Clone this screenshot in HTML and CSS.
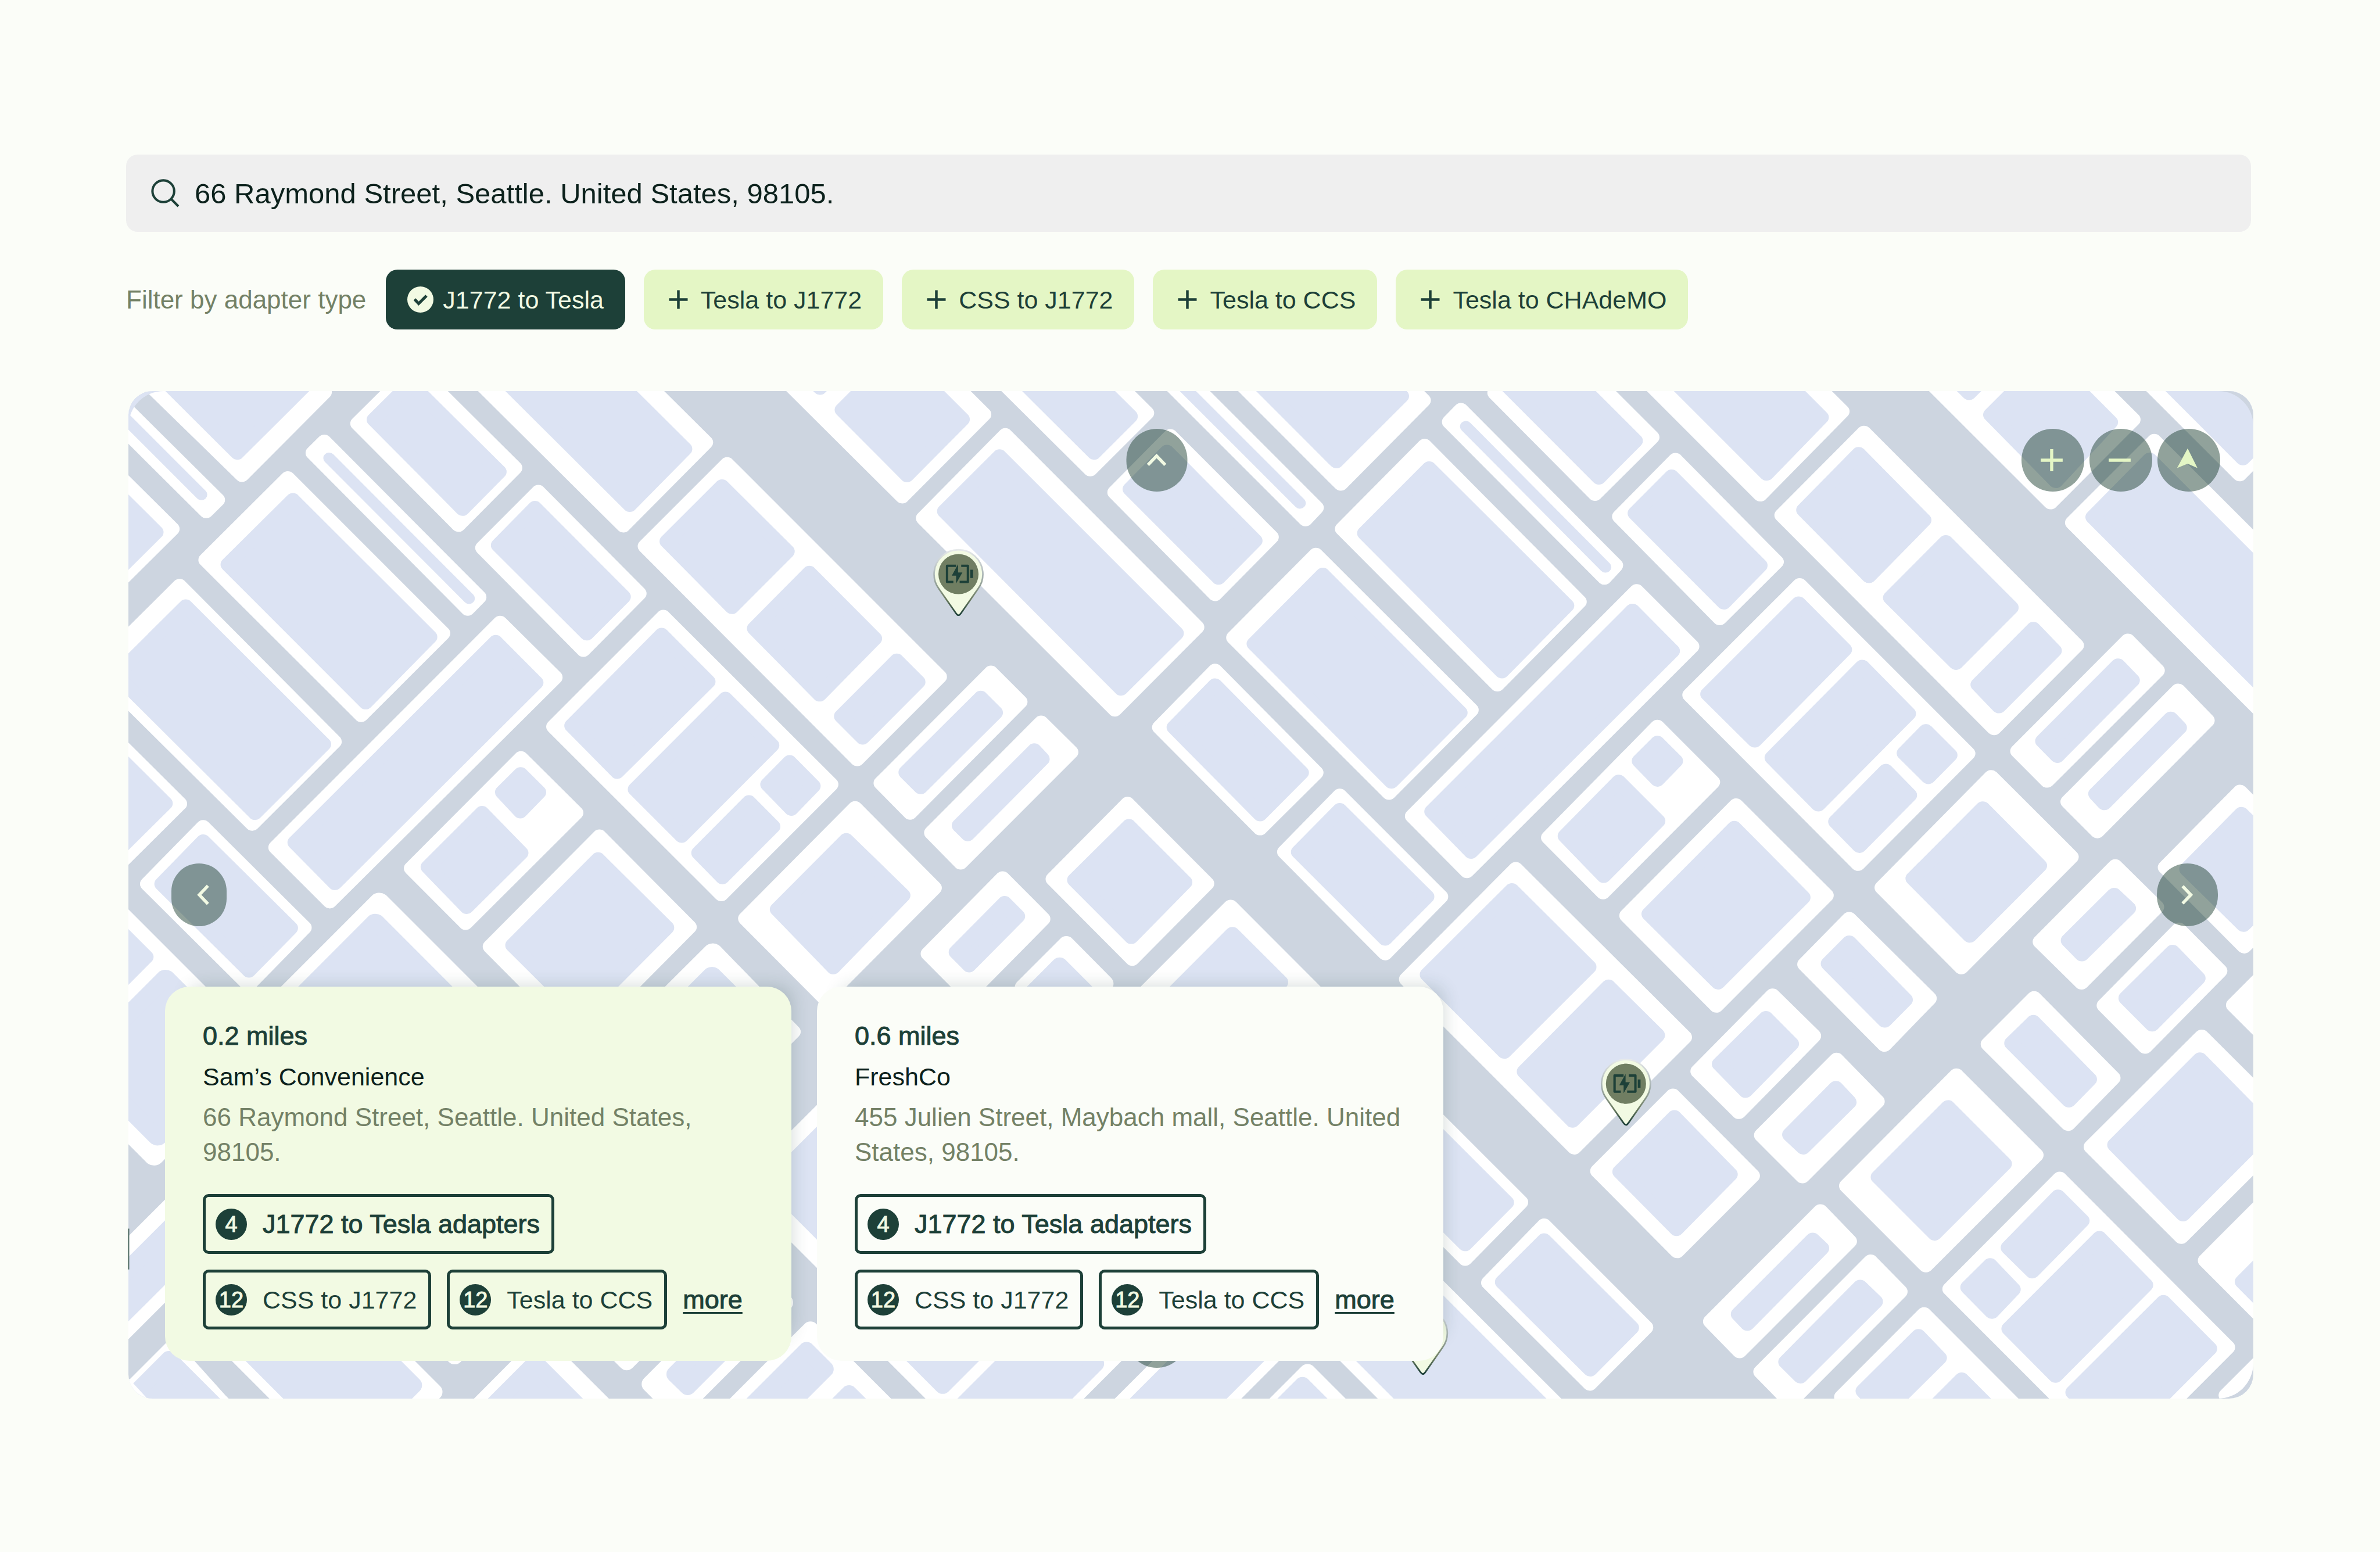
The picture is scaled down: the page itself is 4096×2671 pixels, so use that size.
FILE: index.html
```html
<!DOCTYPE html>
<html lang="en">
<head>
<meta charset="utf-8">
<meta name="viewport" content="width=device-width, initial-scale=1">
<title>Adapter finder</title>
<link rel="stylesheet" href="styles.css">
</head>
<body>
<main class="page">
  <form class="search" role="search">
    <label for="address" class="search-icon" aria-label="Address">
      <svg viewBox="0 0 72 72" fill="none" stroke="currentColor" stroke-width="6"><circle cx="31" cy="31" r="27.500"/><path d="M50 50L69 69"/></svg>
    </label>
    <input id="address" type="text" value="66 Raymond Street, Seattle. United States, 98105.">
  </form>

  <div class="filters">
    <span class="filters-label">Filter by adapter type</span>
    <button class="chip chip-on" type="button" aria-pressed="true">
      <svg class="chip-icon" viewBox="0 0 45 45"><circle cx="22.500" cy="22.500" r="22.500" fill="#f2fae3"/><path d="M12.500 22L19.500 29.500L33 16" fill="none" stroke="#1d4038" stroke-width="5"/></svg>J1772 to Tesla</button>
    <button class="chip" type="button"><svg class="chip-icon" viewBox="0 0 45 45"><path d="M22.500 6.500V38.500M6.500 22.500H38.500" stroke="currentColor" stroke-width="4.500"/></svg>Tesla to J1772</button>
    <button class="chip" type="button"><svg class="chip-icon" viewBox="0 0 45 45"><path d="M22.500 6.500V38.500M6.500 22.500H38.500" stroke="currentColor" stroke-width="4.500"/></svg>CSS to J1772</button>
    <button class="chip" type="button"><svg class="chip-icon" viewBox="0 0 45 45"><path d="M22.500 6.500V38.500M6.500 22.500H38.500" stroke="currentColor" stroke-width="4.500"/></svg>Tesla to CCS</button>
    <button class="chip" type="button"><svg class="chip-icon" viewBox="0 0 45 45"><path d="M22.500 6.500V38.500M6.500 22.500H38.500" stroke="currentColor" stroke-width="4.500"/></svg>Tesla to CHAdeMO</button>
  </div>

  <section class="map" aria-label="Map">
    <svg class="streets" viewBox="327 992 5399 2560">
      <defs>
        <linearGradient id="rim" x1="0" y1="0" x2="0" y2="1">
          <stop offset="0" stop-color="#e6e9ea"/><stop offset=".4" stop-color="#a9b4b4"/><stop offset=".75" stop-color="#6d7d62"/><stop offset="1" stop-color="#1d4038"/>
        </linearGradient>
        <g id="pin">
          <path d="M-6 100L-50 37A62 62 0 1 1 50 37L6 100Q0 109-6 100Z" fill="#f2fae3" stroke="url(#rim)" stroke-width="4"/>
          <circle r="51" fill="#707e62"/>
          <path d="M-6-21H-29V20H-13M7-21H24V20H3" fill="none" stroke="#1d4038" stroke-width="6" stroke-linejoin="round"/>
          <path d="M30-11H37V10H30ZM-1-25V-4H10L-6 24V4H-17Z" fill="#1d4038"/>
        </g>
      </defs>

      <g transform="translate(320 980) scale(.8673 .8291)">
        <path class="plot" d="M35-40L341 272 583 18 530-40ZM-40 96L236 383 270 348-40 26ZM-40 253L137 437-40 621ZM234 532L475 281 930 757 690 1008ZM548 204L582 169 1036 646 1002 682ZM679 114L845-58 1141 250 975 425ZM1045 495L1209 323 1505 635 1341 808ZM1009-40L1458 427 1700 172 1496-40ZM-87 866L158 611 612 1089 371 1341ZM-40 1072L159 1279-40 1486ZM1097 724L1259 892 598 1579 439 1413ZM1158 1139L1320 1307 996 1645 836 1477ZM1388 1379L1652 1657 1331 1995 1067 1717ZM227 1350L524 1659 360 1834 63 1525Z"/>
        <path class="building" d="M93-40L327 204 561-40ZM-40 312L90 447-40 582ZM299 546L490 348 892 768 703 969ZM727 102L834-9 1095 262 987 376ZM1091 487L1199 372 1459 645 1351 758ZM1089-40L1477 364 1639 192 1416-40ZM-27 885L176 674 581 1097 379 1308ZM-40 1115L117 1278-40 1441ZM1084 783L1203 908 613 1523 495 1398ZM1157 1188L1211 1244 1156 1303 1103 1244ZM1044 1307L1159 1430 999 1596 885 1473ZM1384 1449L1586 1659 1335 1923 1133 1713ZM227 1394L484 1660 361 1791 105 1525Z"/>
        <path class="lane" d="M222 332L-40 58M596 220L1006 650"/>
      </g>

      <g transform="translate(1660 980) scale(.8673 .8291)">
        <path class="plot" d="M-24 490L217 238 840 890 598 1143ZM-292 1043L30 706 522 1220 200 1557ZM367-40L730 338 970 86 849-40ZM791 404L1032 149 1594 738 1353 991ZM997-40L1281 255 1447 82 1330-40ZM990 877L1076 967 753 1307 667 1216ZM1137 1030L1225 1121 901 1460 815 1368ZM592 1292L825 1537 503 1876 270 1631ZM1390 1279L1623 1524 1404 1755 1171 1510ZM1024 1507L1143 1632 924 1864 805 1739Z"/>
        <path class="building" d="M40 475L202 306 394 506 231 677ZM296 742L458 571 650 773 488 945ZM551 1011L714 840 777 906 614 1077ZM-239 1040L25 761 162 905-105 1182ZM-53 1235L212 957 349 1100 84 1378ZM335 1220L400 1151 470 1225 405 1295ZM133 1430L281 1274 352 1349 203 1505ZM553 72L716-98 907 101 744 273ZM446-40L489 5 532-40ZM853 383L1015 214 1534 757 1371 927ZM1058-40L1292 204 1399 92 1272-40ZM960 954L1004 1000 784 1229 740 1183ZM1117 1115L1141 1142 922 1373 896 1346ZM566 1390L733 1560 528 1781 363 1603ZM1394 1347L1559 1520 1401 1688 1234 1513ZM1030 1583L1069 1624 926 1775 887 1734Z"/>
      </g>

      <g transform="translate(3000 980) scale(.8801 .8291)">
        <path class="plot" d="M-61-40L361 408 393 372 5-40ZM-190 325L-29 152 263 462 100 637ZM-61 1045L100 871 392 1184 230 1355ZM144-40L463 299 702 43 624-40ZM467 437L705 182 1152 660 915 914ZM776 109L810 72 1257 549 1224 587ZM907 20L964-40 1177-40 1362 156 1197 330ZM153 770L391 516 840 992 602 1246ZM1317 627L1477 797 827 1486 669 1317ZM1267 399L1429 225 1721 538 1557 711ZM1377 1043L1537 1213 1220 1551 1062 1383ZM460 1254L752 1564 591 1738 300 1427Z"/>
        <path class="building" d="M-146 315L-39 200 216 473 110 587ZM-19 1045L100 916 350 1184 230 1312ZM196-40L450 230 639 30 573-40ZM531 450L718 251 1116 672 928 874ZM907-40L1208 280 1314 167 1119-40ZM212 789L411 577 808 1000 609 1212ZM1305 687L1421 811 839 1427 725 1303ZM1312 389L1418 276 1674 549 1569 663ZM1377 1092L1430 1148 1377 1206 1324 1148ZM1265 1211L1379 1332 1222 1501 1110 1378ZM460 1298L712 1564 591 1693 340 1427Z"/>
        <path class="lane" d="M345 358L-30-40M824 123L1227 554"/>
      </g>

      <g transform="translate(4360 980) scale(.8929 .8291)">
        <path class="plot" d="M-218-40L127 332 360 77 251-40ZM188 395L422 142 1027 794 792 1048ZM-74 946L239 609 718 1125 405 1464ZM585-40L953 356 1188 102 1056-40ZM1015 418L1248 167 1700 654 1700 1156ZM1203-40L1491 270 1700 45 1700-40ZM1173 779L1257 871 943 1209 859 1118ZM1316 932L1399 1024 1086 1364 1002 1273ZM784 1197L1012 1442 699 1781 473 1536ZM1492 1242L1717 1485 1504 1717 1279 1474Z"/>
        <path class="building" d="M-141-40L145 268 301 95 176-40ZM250 379L407 207 593 410 436 582ZM497 648L655 477 841 678 684 848ZM746 914L904 743 964 810 806 981ZM-23 943L236 665 367 807 111 1086ZM160 1138L417 859 549 1003 292 1282ZM536 1124L598 1056 667 1130 605 1198ZM341 1334L484 1178 552 1253 409 1409ZM782 87L900-40 985-40 1124 110 968 291ZM664-40L721 21 778-40ZM1073 401L1235 224 1700 725 1700 1076ZM1258-40L1500 221 1700 6 1700-40ZM1145 855L1186 901 972 1133 930 1087ZM1295 1018L1320 1046 1106 1278 1081 1249ZM760 1293L922 1469 723 1684 561 1508ZM1496 1310L1658 1481 1502 1651 1340 1480Z"/>
      </g>

      <g transform="translate(3000 2260) scale(.8801 .8418)">
        <path class="plot" d="M145 50L445 364 100 700-200 411ZM968-64L1456 444 1137 777 652 269ZM1604-256L1865 16 1547 349 1288 77ZM650 594L983 942 822 1113 650 933ZM1050 1012L1344 1320 1182 1490 889 1185ZM1422 620L1652 862 1434 1090 1204 848ZM420 1348L650 1096 1152 1620 680 1620Z"/>
        <path class="building" d="M150 132L290 278 100 480-60 352ZM957 0L1180 232 935 488 712 255ZM1236 291L1378 438 1132 696 992 548ZM1599-188L1798 22 1552 279 1352 72ZM650 638L942 943 822 1069 650 889ZM1050 1057L1303 1321 1183 1447 929 1183ZM1426 685L1588 858 1432 1023 1268 850ZM466 1348L650 1140 1109 1620 726 1620Z"/>
      </g>

      <g transform="translate(4360 2260) scale(.8929 .8418)">
        <path class="plot" d="M253 224L380 87 608 327 480 467ZM162 318L279 440 66 670-51 547ZM130 740L344 512 460 638 247 864ZM372 893L685 559 912 800 598 1133ZM775 465L906 326 1131 567 1003 706ZM1137-72L1255 51 1041 279 923 156ZM1105 348L1318 119 1435 244 1222 473ZM1473 347L1620 191 1620 503ZM1068 775L1383 442 1640 714 1325 1047ZM1393 1118L1700 792 1700 1444ZM666 1204L979 871 1457 1380 1231 1620 1058 1620ZM298 969L381 1060 68 1392-15 1302ZM441 1121L525 1212 212 1545 128 1454ZM358 1530L593 1280 913 1620 443 1620ZM1452 1525L1620 1347 1620 1620 1540 1620Z"/>
        <path class="building" d="M320 222L380 158 540 331 481 394ZM143 386L216 464 85 606 10 525ZM210 738L342 597 380 640 249 777ZM462 866L661 655 822 826 623 1037ZM842 462L904 398 1064 571 1005 635ZM1134 14L1175 55 1042 194 1003 152ZM1300 186L1373 266 1242 406 1167 326ZM1135 769L1378 511 1573 721 1330 979ZM1498 1182L1640 1031 1640 1333ZM832 1079L974 925 1043 998 901 1151ZM717 1199L781 1132 847 1205 786 1273ZM834 1324L1092 1050 1224 1192 967 1466ZM1016 1516L1274 1243 1406 1384 1184 1620 1114 1620ZM276 1055L302 1081 90 1309 64 1280ZM411 1197L455 1242 241 1468 199 1424ZM577 1346L637 1412 479 1578 419 1512ZM700 1477L835 1620 565 1620ZM1510 1530L1600 1440 1600 1600Z"/>
      </g>

      <g transform="translate(300 2160) scale(1.1224 .9056)">
        <path class="plot" d="M592 139L851 460 333 460ZM1347 281L1525 508 1400 663 1202 460ZM-30 131L200 416 300 592 82 862-30 723ZM-30 1182L150 959 150 1181-30 1404Z"/>
        <path class="building" d="M583 198L794 460 372 460ZM1345 347L1436 460 1254 460ZM-30 186L60 298-30 410ZM108 355L250 531 250 608 90 806-30 657-30 526ZM-30 1240L150 1017 150 1131-30 1354Z"/>
      </g>

      <g>
        <path class="plot" d="M440 3423L470 3460 560 3560 660 3660 300 3660 300 3563ZM563 3400L969 3400 1104 3535 1039 3600 763 3600ZM1100 3388L1156 3444 1212 3388ZM1534 3400L1593 3459 1652 3400ZM1376 3410L1566 3600 1187 3600ZM1767 3400L1652 3515 1723 3586 1909 3400ZM2060 3377L2283 3600 1837 3600ZM2230 3400L2877 3400 2677 3600 2430 3600ZM3015 3400L3277 3400 3077 3600 2815 3600ZM3323 3485L3438 3600 3208 3600ZM2200 2712L1960 2952 1960 3074 2200 3314ZM1995 3308L1900 3213 1900 3403ZM2710 2398L2809 2498 2700 2607 2600 2508Z"/>
        <path class="building" d="M430 3452L578 3600 300 3600 300 3582ZM598 3400L934 3400 1052 3518 970 3600 798 3600ZM1361 3461L1500 3600 1222 3600ZM1805 3400L1715 3490 1748 3522 1870 3400ZM2050 3429L2098 3477 1975 3600 1879 3600ZM2158 3539L2219 3600 2097 3600ZM2277 3400L2396 3519 2515 3400ZM2615 3400L2722 3400 2785 3463 2648 3600 2415 3600ZM3053 3400L3240 3400 3040 3600 2853 3600ZM3310 3518L3392 3600 3228 3600ZM2150 2817L1970 2997 1970 3012 2150 3192ZM2693 2452L2780 2539 2606 2539Z"/>
      </g>

      <path d="M327 1080A90 90 0 0 1 417 992H327Z" fill="#dce3f3"/>
      <path d="M5637 992A89 89 0 0 1 5726 1080V992ZM5726 3462A90 90 0 0 1 5636 3552H5726Z" fill="#cdd5e0"/>
      <path d="M327 3500L375 3552H327Z" fill="#fff"/>
      <path d="M327 3120H329V3224H327Z" fill="#1d4038"/>

      <use href="#pin" x="2436" y="1457"/>
      <use href="#pin" x="4132" y="2752"/>
      <use href="#pin" x="3616" y="3385"/>
    </svg>

    <button class="round pan-up" type="button" aria-label="Pan up"><svg viewBox="-80 -80 160 160"><path d="M-22 12L0-11L22 12"/></svg></button>
    <button class="round pan-left" type="button" aria-label="Pan left"><svg viewBox="-80 -80 160 160"><path d="M22-23L0 0L22 23"/></svg></button>
    <button class="round pan-right" type="button" aria-label="Pan right"><svg viewBox="-80 -80 160 160"><path d="M-13-22L8 0L-13 22"/></svg></button>
    <button class="round pan-down" type="button" aria-label="Pan down"><svg viewBox="-80 -80 160 160"><path d="M-22-12L0 11L22-12"/></svg></button>
    <div class="zoom">
      <button class="round" type="button" aria-label="Zoom in"><svg viewBox="-80 -80 160 160"><path d="M-31 0H25M-3-28V28"/></svg></button>
      <button class="round" type="button" aria-label="Zoom out"><svg viewBox="-80 -80 160 160"><path d="M-31 0H25"/></svg></button>
      <button class="round" type="button" aria-label="My location"><svg viewBox="-80 -80 160 160"><path class="solid" d="M-3-30L22 20L-3 9L-30 20Z"/></svg></button>
    </div>

    <div class="cards">
      <article class="card card-on">
        <p class="distance">0.2 miles</p>
        <h2 class="name">Sam’s Convenience</h2>
        <p class="address">66 Raymond Street, Seattle. United States, 98105.</p>
        <div class="stock">
          <div class="row"><span class="tag strong"><span class="count">4</span>J1772 to Tesla adapters</span></div>
          <div class="row"><span class="tag"><span class="count">12</span>CSS to J1772</span><span class="tag"><span class="count">12</span>Tesla to CCS</span><a class="more" href="#more-sams">more</a></div>
        </div>
      </article>
      <article class="card">
        <p class="distance">0.6 miles</p>
        <h2 class="name">FreshCo</h2>
        <p class="address">455 Julien Street, Maybach mall, Seattle. United States, 98105.</p>
        <div class="stock">
          <div class="row"><span class="tag strong"><span class="count">4</span>J1772 to Tesla adapters</span></div>
          <div class="row"><span class="tag"><span class="count">12</span>CSS to J1772</span><span class="tag"><span class="count">12</span>Tesla to CCS</span><a class="more" href="#more-freshco">more</a></div>
        </div>
      </article>
    </div>
  </section>
</main>
</body>
</html>
```

FILE: styles.css
```css
* { box-sizing: border-box; }

body {
  margin: 0;
  background: #fbfdf8;
  color: #1d4038;
  font-family: "Liberation Sans", Arial, sans-serif;
  font-size: 43px;
  line-height: 60px;
}

p, h2 { margin: 0; }

button { border: 0; font: inherit; color: inherit; cursor: pointer; }

.page { padding: 266px 218px 264px 217px; }

/* Search */
.search {
  display: flex;
  align-items: center;
  gap: 26px;
  height: 133px;
  margin-right: 4px;
  padding: 0 43px;
  border-radius: 20px;
  background: #efefef;
}
.search-icon, .search-icon svg { display: block; width: 49px; height: 49px; }
.search input {
  flex: 1;
  padding: 0;
  border: 0;
  outline: 0;
  background: none;
  color: #0c211c;
  font: inherit;
  font-size: 49px;
}

/* Filters */
.filters {
  display: flex;
  align-items: center;
  gap: 32px;
  margin-top: 65px;
}
.filters-label { margin-right: 2px; color: #738166; font-size: 44px; }
.chip {
  display: flex;
  align-items: center;
  gap: 16px;
  height: 103px;
  padding: 0 37px;
  border-radius: 20px;
  background: #e4f6c5;
  white-space: nowrap;
}
.chip-on { background: #1d4038; color: #f2fae3; }
.chip-icon { width: 45px; height: 45px; }

/* Map */
.map {
  position: relative;
  margin: 106px 0 0 4px;
  border-radius: 42px;
  background: #cdd5e0;
  overflow: hidden;
}
.streets { display: block; width: 100%; }
.plot, .building { stroke-width: 42; stroke-linejoin: round; }
.plot { fill: #fff; stroke: #fff; }
.building { fill: #dce3f3; stroke: #dce3f3; }
.lane { fill: none; stroke: #dce3f3; stroke-width: 34; stroke-linecap: round; }

.round {
  display: flex;
  align-items: center;
  justify-content: center;
  width: 108px;
  height: 108px;
  padding: 0;
  border-radius: 54px;
  background: rgba(35, 69, 56, .5);
}
.round svg { flex: none; width: 108px; height: 108px; fill: none; stroke: #f2fae3; stroke-width: 8; }
.pan-up, .pan-down, .pan-left, .pan-right { position: absolute; }
.pan-up, .pan-down { left: 48.4%; width: 105px; transform: translateX(-50%); }
.pan-up { top: 65px; }
.pan-down { bottom: 53px; }
.pan-left, .pan-right { top: 50%; transform: translateY(-50%); }
.pan-left { left: 74px; width: 95px; }
.pan-right { right: 61px; width: 105px; }
.zoom { position: absolute; top: 65px; right: 57px; display: flex; gap: 9px; }
.zoom svg { stroke: #e4f6c5; }
.zoom .solid { fill: #e4f6c5; stroke: none; }

/* Store cards */
.cards {
  position: absolute;
  left: 63px;
  bottom: 65px;
  display: flex;
  gap: 44px;
}
.card {
  width: 1078px;
  padding: 55px 60px 54px 65px;
  border-radius: 42px;
  background: #fbfdf8;
  box-shadow: 20px -20px 30px -20px rgba(29, 64, 56, .2);
}
.card-on { background: #f2fae3; }
.distance, .name { margin-bottom: 10px; }
.distance, .strong, .more { font-size: 45px; -webkit-text-stroke: 1px currentColor; }
.name { color: #0c211c; font-size: 43px; font-weight: 400; }
.address { color: #738166; font-size: 44px; }
.stock { display: flex; flex-direction: column; gap: 27px; margin-top: 42px; }
.row { display: flex; align-items: center; gap: 27px; }
.tag {
  display: flex;
  align-items: center;
  gap: 27px;
  height: 103px;
  padding: 0 20px 0 17px;
  border: 5px solid #1d4038;
  border-radius: 10px;
  white-space: nowrap;
}
.count {
  width: 54px;
  height: 54px;
  border-radius: 50%;
  background: #1d4038;
  color: #f2fae3;
  font-size: 38px;
  line-height: 54px;
  text-align: center;
  -webkit-text-stroke: 1px currentColor;
}
.more {
  color: inherit;
  text-decoration-thickness: 3px;
  text-underline-offset: 6px;
}
```
